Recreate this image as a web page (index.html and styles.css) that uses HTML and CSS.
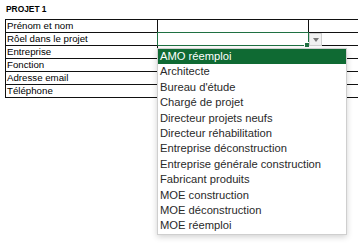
FILE: index.html
```html
<!DOCTYPE html>
<html lang="fr">
<head>
    <meta charset="UTF-8">
    <meta name="viewport" content="width=device-width, initial-scale=1.0">
    <title>Projet 1</title>
    <link rel="stylesheet" href="styles.css">
</head>
<body>

<div class="page">
    <div class="title">PROJET 1</div>
    <div class="sheet">
        <div class="cell label">Prénom et nom</div>
        <div class="cell"></div>
        <div class="cell last"></div>

        <div class="cell label">Rôel dans le projet</div>
        <div class="cell selected">
            <span class="handle"></span>
            <span class="arrow-btn"><span class="arrow"></span></span>
            <ul class="dropdown">
                <li class="active">AMO réemploi</li>
                <li>Architecte</li>
                <li>Bureau d'étude</li>
                <li>Chargé de projet</li>
                <li>Directeur projets neufs</li>
                <li>Directeur réhabilitation</li>
                <li>Entreprise déconstruction</li>
                <li>Entreprise générale construction</li>
                <li>Fabricant produits</li>
                <li>MOE construction</li>
                <li>MOE déconstruction</li>
                <li>MOE réemploi</li>
            </ul>
        </div>
        <div class="cell last"></div>

        <div class="cell label">Entreprise</div>
        <div class="cell"></div>
        <div class="cell last"></div>

        <div class="cell label">Fonction</div>
        <div class="cell"></div>
        <div class="cell last"></div>

        <div class="cell label">Adresse email</div>
        <div class="cell"></div>
        <div class="cell last"></div>

        <div class="cell label">Téléphone</div>
        <div class="cell"></div>
        <div class="cell last"></div>
    </div>
</div>

</body>
</html>
```

FILE: styles.css
```css
html, body {
    height: 100%;
}

body {
    margin: 0;
    background-color: #fff;
    font-family: 'Liberation Sans', Arial, sans-serif;
    color: #000;
}

.page {
    min-height: 100%;
    box-sizing: border-box;
    padding: 4px 0 0 5px;
}

.title {
    font-size: 8.4px;
    font-weight: bold;
    height: 15px;
    line-height: 11px;
    padding-left: 1px;
}

.sheet {
    display: grid;
    grid-template-columns: 152px 151px 50px;
    grid-auto-rows: 13px;
    border-top: 1px solid #111;
    border-left: 1px solid #111;
    width: 353px;
}

.cell {
    border-right: 1px solid #111;
    border-bottom: 1px solid #111;
    font-size: 9.7px;
    line-height: 12px;
    padding-left: 1px;
    white-space: nowrap;
}

.cell.last {
    border-right: none;
}

.selected {
    position: relative;
}

.selected::after {
    content: '';
    position: absolute;
    top: -1px;
    left: -1px;
    right: -1px;
    bottom: -1px;
    border: 1px solid #1f7042;
}

.handle {
    position: absolute;
    right: -2px;
    bottom: -3px;
    width: 4px;
    height: 4px;
    background-color: #1f7042;
    border: 1px solid #fff;
    z-index: 2;
}

.arrow-btn {
    position: absolute;
    left: 151px;
    top: 0;
    width: 11px;
    height: 11px;
    background-color: #f1f1f1;
    border: 1px solid #d0d0d0;
    display: flex;
    align-items: center;
    justify-content: center;
    z-index: 2;
}

.arrow {
    width: 0;
    height: 0;
    border-left: 3px solid transparent;
    border-right: 3px solid transparent;
    border-top: 4px solid #777;
}

.dropdown {
    position: absolute;
    left: -1px;
    top: 15px;
    width: 188px;
    margin: 0;
    padding: 0;
    list-style: none;
    background-color: #fff;
    border: 1px solid #cfcfcf;
    box-shadow: 0 2px 6px rgba(0, 0, 0, 0.18);
    z-index: 3;
}

.dropdown li {
    height: 15.4px;
    line-height: 15.4px;
    padding-left: 2px;
    font-size: 11.2px;
    color: #2a2a2a;
}

.dropdown li.active {
    background-color: #0f6a33;
    color: #fff;
}
```
